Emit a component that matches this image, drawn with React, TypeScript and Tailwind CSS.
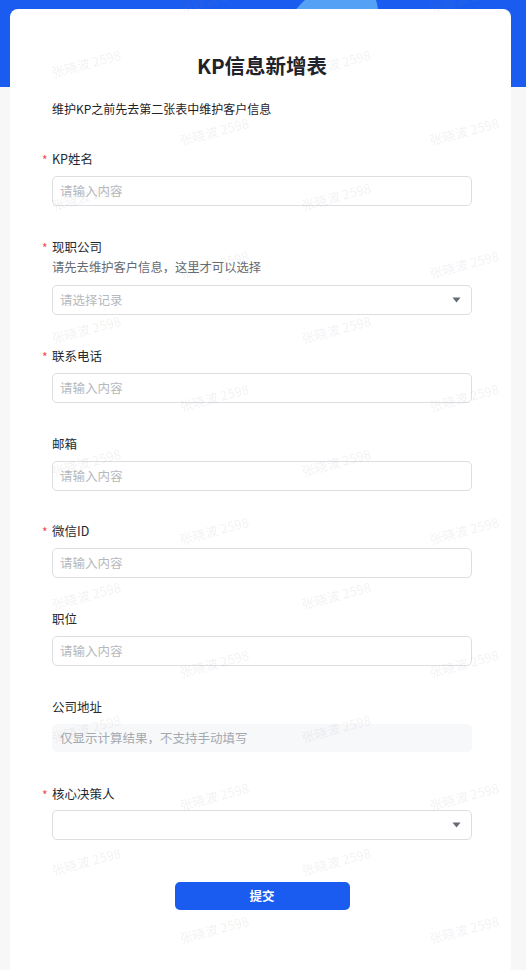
import React from 'react'

const FONT = '"Noto Sans CJK SC", "Noto Sans", "Liberation Sans", sans-serif'

// watermark grid: two staggered rows per 133px
const MARKS: { x: number; y: number }[] = []
for (let k = 0; k < 8; k++) {
  MARKS.push({ x: 180, y: 8 + k * 133 - 8 }, { x: 430, y: 8 + k * 133 - 8 })
  MARKS.push({ x: 52, y: 73 + k * 133 - 8 }, { x: 302, y: 73 + k * 133 - 8 })
}

function Label({ text, required }: { text: string; required?: boolean }) {
  return (
    <div className="relative h-5 leading-5 text-[12.5px] text-[#262a30]">
      {required && (
        <span className="absolute -left-[10px] top-[1px] text-[#f54a45] text-[12px]">*</span>
      )}
      {text}
    </div>
  )
}

function TextInput() {
  return (
    <div className="mt-[7px] h-[30px] rounded-[5px] border border-[#dcdee2] bg-white px-[7px] flex items-center text-[12.5px] text-[#b6b9be]">
      请输入内容
    </div>
  )
}

function Caret() {
  return (
    <svg width="9" height="6" viewBox="0 0 9 6" className="shrink-0">
      <path d="M0.5 0.5H8.5L4.5 5.5Z" fill="#646a73" />
    </svg>
  )
}

function SelectBox({ placeholder }: { placeholder?: string }) {
  return (
    <div className="h-[30px] rounded-[5px] border border-[#dcdee2] bg-white pl-[7px] pr-[10px] flex items-center justify-between text-[12.5px] text-[#b6b9be]">
      <span>{placeholder}</span>
      <Caret />
    </div>
  )
}

export default function App() {
  return (
    <div
      className="relative h-[970px] overflow-hidden bg-[linear-gradient(#1a5cf0_0,#1a5cf0_87px,#f7f7f7_87px)]"
      style={{ fontFamily: FONT }}
    >
      {/* decorative shape in header */}
      <svg className="absolute left-0 top-0" width="526" height="20" viewBox="0 0 526 20">
        <path d="M305 0 L376 0 Q378 6 379 20 L288 20 Q296 8 305 0Z" fill="#55a1f5" />
      </svg>

      <div className="relative ml-[10px] mt-[9px] w-[501px] h-[961px] rounded-t-[8px] bg-white pt-[42px] pl-[42px] pr-[39px]">
        <h1 className="text-center text-[20.5px] leading-7 font-bold text-[#1f2329]">
          KP信息新增表
        </h1>
        <p className="mt-5 h-5 leading-5 text-[12px] text-[#1f2329]">
          维护KP之前先去第二张表中维护客户信息
        </p>

        <div className="mt-[30px] flex flex-col">
          <div className="mb-[31px]">
            <Label text="KP姓名" required />
            <TextInput />
          </div>

          <div className="mb-[31px]">
            <Label text="现职公司" required />
            <div className="h-5 leading-5 text-[12.3px] text-[#646a73]">
              请先去维护客户信息，这里才可以选择
            </div>
            <div className="mt-2">
              <SelectBox placeholder="请选择记录" />
            </div>
          </div>

          <div className="mb-[31px]">
            <Label text="联系电话" required />
            <TextInput />
          </div>

          <div className="mb-[30px]">
            <Label text="邮箱" />
            <TextInput />
          </div>

          <div className="mb-[31px]">
            <Label text="微信ID" required />
            <TextInput />
          </div>

          <div className="mb-[31px]">
            <Label text="职位" />
            <TextInput />
          </div>

          <div className="mb-[32px]">
            <Label text="公司地址" />
            <div className="mt-[7px] h-[28px] rounded-[5px] bg-[#f7f8fa] px-[8px] flex items-center text-[12.5px] text-[#a5a9af]">
              仅显示计算结果，不支持手动填写
            </div>
          </div>

          <div>
            <Label text="核心决策人" required />
            <div className="mt-[6px]">
              <SelectBox />
            </div>
          </div>
        </div>

        <div className="mt-[42px] flex justify-center">
          <button className="h-[28px] w-[175px] rounded-[5px] bg-[#1a5cf0] text-white text-[12.5px] font-bold">
            提交
          </button>
        </div>
      </div>

      {/* watermark layer */}
      <div className="pointer-events-none absolute inset-0 overflow-hidden">
        {MARKS.map((m, i) => (
          <span
            key={i}
            className="absolute whitespace-nowrap text-[13px] leading-4 text-[rgba(140,140,140,0.12)] -rotate-[15deg] origin-left"
            style={{ left: m.x, top: m.y }}
          >
            张晓波 2598
          </span>
        ))}
      </div>
    </div>
  )
}
